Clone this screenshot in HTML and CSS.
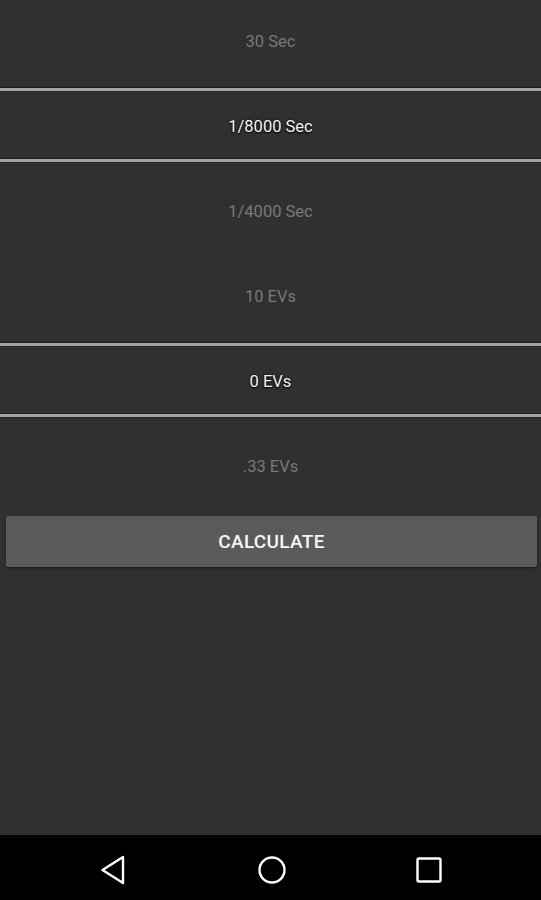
FILE: index.html
```html
<!DOCTYPE html>
<html>
<head>
<meta charset="utf-8">
<link rel="stylesheet" href="styles.css">
</head>
<body>
<div class="screen">
  <main class="content">
    <div class="picker">
      <div class="item dim">30 Sec</div>
      <div class="item sel">1/8000 Sec</div>
      <div class="item dim">1/4000 Sec</div>
      <div class="divider top"></div>
      <div class="divider bottom"></div>
    </div>
    <div class="picker">
      <div class="item dim">10 EVs</div>
      <div class="item sel">0 EVs</div>
      <div class="item dim">.33 EVs</div>
      <div class="divider top"></div>
      <div class="divider bottom"></div>
    </div>
    <button class="calc">CALCULATE</button>
  </main>
  <nav class="navbar">
    <svg class="nav-icon" width="30" height="30" viewBox="0 0 30 30"><path d="M24 2 L3.5 15 L24 28 Z" fill="none" stroke="#fff" stroke-width="2.4" stroke-linejoin="round"/></svg>
    <svg class="nav-icon" width="30" height="30" viewBox="0 0 30 30"><circle cx="15" cy="15" r="12.5" fill="none" stroke="#fff" stroke-width="2.4"/></svg>
    <svg class="nav-icon" width="30" height="30" viewBox="0 0 30 30"><rect x="3.5" y="3.5" width="23" height="23" rx="1.5" fill="none" stroke="#fff" stroke-width="2.4"/></svg>
  </nav>
</div>
</body>
</html>
```

FILE: styles.css
```css
html, body {
  margin: 0;
  padding: 0;
  background: #303030;
}
body {
  font-family: Roboto, "Liberation Sans", sans-serif;
}
.screen {
  width: 541px;
  height: 900px;
  display: flex;
  flex-direction: column;
  overflow: hidden;
}
.content {
  flex: 1;
  display: flex;
  flex-direction: column;
  background: #303030;
  min-height: 0;
}
.picker {
  position: relative;
  height: 255px;
  flex: none;
  display: flex;
  flex-direction: column;
}
.item {
  height: 85px;
  display: flex;
  align-items: center;
  justify-content: center;
  font-size: 16.5px;
  padding-bottom: 2px;
  box-sizing: border-box;
}
.item.dim {
  color: #797979;
}
.item.sel {
  color: #f6f6f6;
  text-shadow: 0 0 2px #000, 0 1px 2px #000;
}
.divider {
  position: absolute;
  left: 0;
  right: 0;
  height: 3px;
  border-top: 1px solid #1c1c1c;
  border-bottom: 1px solid #262626;
  background: #a4a4a4;
}
.divider.top {
  top: 87px;
}
.divider.bottom {
  top: 158px;
}
.calc {
  margin: 6px 4px 0 6px;
  height: 51px;
  flex: none;
  border: none;
  border-radius: 2px;
  background: #5b5b5b;
  color: #f6f6f6;
  font-family: Roboto, "Liberation Sans", sans-serif;
  font-weight: 500;
  font-size: 19px;
  letter-spacing: 0.3px;
  box-shadow: 0 1px 2px rgba(0,0,0,0.5);
  padding: 0;
}
.navbar {
  height: 65px;
  flex: none;
  background: #000;
  display: flex;
  align-items: center;
  justify-content: space-between;
  padding: 4px 97px 0 99px;
  box-sizing: border-box;
}
.nav-icon {
  display: block;
}
```
